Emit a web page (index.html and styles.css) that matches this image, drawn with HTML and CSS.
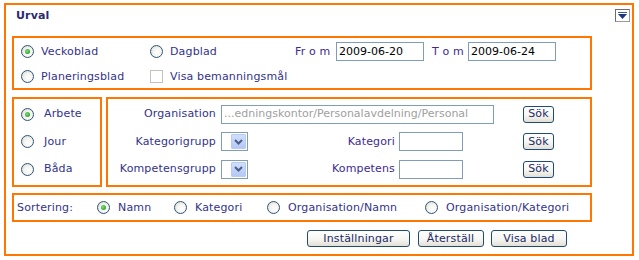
FILE: index.html
```html
<!DOCTYPE html>
<html lang="sv">
<head>
<meta charset="utf-8">
<title>Urval</title>
<link rel="stylesheet" href="styles.css">
</head>
<body>
<div class="panel">
  <div class="head">
    <span class="title">Urval</span>
    <span class="collapse"><svg width="13" height="11" viewBox="0 0 13 11"><rect x="2" y="2" width="9" height="1" fill="#3a5aa8"/><polygon points="2,4 11,4 6.5,9" fill="#1c3680"/></svg></span>
  </div>

  <div class="sec sec1">
    <div class="row">
      <span class="opt w129"><span class="radio on"></span><span class="lbl">Veckoblad</span></span>
      <span class="opt w145"><span class="radio"></span><span class="lbl">Dagblad</span></span>
      <span class="dlabel w41 purple">Fr o m</span>
      <span class="input date">2009-06-20</span>
      <span class="dlabel w36 purple tom">T o m</span>
      <span class="input date">2009-06-24</span>
    </div>
    <div class="row">
      <span class="opt w129"><span class="radio"></span><span class="lbl">Planeringsblad</span></span>
      <span class="opt"><span class="check"></span><span class="lbl">Visa bemanningsmål</span></span>
    </div>
  </div>

  <div class="sec2">
    <div class="sec left">
      <div class="lrow"><span class="radio on"></span><span class="lbl2">Arbete</span></div>
      <div class="lrow"><span class="radio"></span><span class="lbl2">Jour</span></div>
      <div class="lrow"><span class="radio"></span><span class="lbl2">Båda</span></div>
    </div>
    <div class="sec right">
      <span class="c1">Organisation</span>
      <span class="input org">...edningskontor/Personalavdelning/Personal</span>
      <span class="c7"><span class="btn sok">Sök</span></span>

      <span class="c1">Kategorigrupp</span>
      <span class="c2"><span class="select"><span class="selbtn"><svg width="9" height="6" viewBox="0 0 9 6"><polyline points="1,1 4.5,4.5 8,1" fill="none" stroke="#4b5f86" stroke-width="2"/></svg></span></span></span>
      <span class="c3 purple">Kategori</span>
      <span class="c4"><span class="input small"></span></span>
      <span class="c7"><span class="btn sok">Sök</span></span>

      <span class="c1">Kompetensgrupp</span>
      <span class="c2"><span class="select"><span class="selbtn"><svg width="9" height="6" viewBox="0 0 9 6"><polyline points="1,1 4.5,4.5 8,1" fill="none" stroke="#4b5f86" stroke-width="2"/></svg></span></span></span>
      <span class="c3 purple">Kompetens</span>
      <span class="c4"><span class="input small"></span></span>
      <span class="c7"><span class="btn sok">Sök</span></span>
    </div>
  </div>

  <div class="sec sort">
    <span class="sortlbl">Sortering:</span>
    <span class="opt w77"><span class="radio on"></span><span class="lbl">Namn</span></span>
    <span class="opt w93"><span class="radio"></span><span class="lbl">Kategori</span></span>
    <span class="opt w158"><span class="radio"></span><span class="lbl">Organisation/Namn</span></span>
    <span class="opt"><span class="radio"></span><span class="lbl">Organisation/Kategori</span></span>
  </div>

  <div class="actions">
    <span class="btn b1">Inställningar</span>
    <span class="btn b2">Återställ</span>
    <span class="btn b3">Visa blad</span>
  </div>
</div>
</body>
</html>
```

FILE: styles.css
```css
html, body {
  margin: 0;
  padding: 0;
  background: #ffffff;
}
body {
  font-family: "DejaVu Sans", Verdana, sans-serif;
  font-size: 11px;
  line-height: 14px;
  letter-spacing: 0.15px;
  color: #333388;
}
.panel {
  margin: 3px 0 0 4px;
  width: 630px;
  height: 253px;
  border: 2px solid #ff7600;
  box-sizing: border-box;
  padding-left: 6px;
}
.head {
  height: 31px;
  display: flex;
  justify-content: space-between;
  align-items: flex-start;
}
.title {
  font-weight: bold;
  color: #2a2a70;
  margin: 4px 0 0 4px;
}
.collapse {
  width: 15px;
  height: 13px;
  margin: 4px 2px 0 0;
  box-sizing: border-box;
  border: 1px solid #9a9a9a;
  border-left-color: #6d6d6d;
  border-top-color: #6d6d6d;
  background: #ffffff;
  display: flex;
  align-items: center;
  justify-content: center;
}
.sec {
  border: 2px solid #ff7600;
  box-sizing: border-box;
}
.sec1 {
  width: 580px;
  height: 54px;
  padding: 4px 0 0 7px;
  display: flex;
  flex-direction: column;
  gap: 6px;
}
.row {
  display: flex;
  align-items: center;
  height: 19px;
}
.opt {
  display: flex;
  align-items: center;
}
.w129 { width: 129px; }
.w145 { width: 145px; }
.w41 { width: 41px; }
.w36 { width: 36px; }
.w77 { width: 77px; }
.w93 { width: 93px; }
.w158 { width: 158px; }
.tom { margin-left: 8px; }
.purple { color: #3d2a8e; }
.lbl { margin-left: 7px; }
.radio {
  width: 13px;
  height: 13px;
  box-sizing: border-box;
  border-radius: 50%;
  border: 1px solid #305378;
  background: radial-gradient(circle at 60% 60%, #ffffff 0%, #f4f4f0 45%, #d4d4cc 100%);
  display: inline-flex;
  align-items: center;
  justify-content: center;
  flex: none;
}
.radio.on::after {
  content: "";
  width: 5px;
  height: 5px;
  border-radius: 50%;
  background: radial-gradient(circle at 40% 40%, #7ee07e 0%, #2ea42e 70%);
}
.check {
  width: 13px;
  height: 13px;
  box-sizing: border-box;
  border: 1px solid #c6c3b6;
  background: #ffffff;
  flex: none;
}
.input {
  height: 19px;
  box-sizing: border-box;
  border: 1px solid #7f9db9;
  background: #ffffff;
  color: #000000;
  padding: 0 2px;
  display: flex;
  align-items: center;
  white-space: nowrap;
  overflow: hidden;
  letter-spacing: 0;
}
.date { width: 88px; }
.org {
  grid-column: 2 / 6;
  width: 273px;
  color: #a0a0a0;
}
.small { width: 64px; }

.sec2 {
  margin-top: 7px;
  display: flex;
  gap: 4px;
}
.left {
  width: 90px;
  height: 90px;
  padding: 5px 0 0 7px;
  display: flex;
  flex-direction: column;
  gap: 7.5px;
}
.lrow {
  height: 20px;
  display: flex;
  align-items: center;
}
.lbl2 { margin-left: 10px; }
.right {
  width: 486px;
  height: 90px;
  padding-top: 5px;
  display: grid;
  grid-template-columns: 113px 27px 151px 64px 31px 29px auto;
  grid-auto-rows: 20px;
  row-gap: 7.5px;
  align-items: center;
}
.c1 {
  grid-column: 1;
  text-align: right;
  padding-right: 5px;
  white-space: nowrap;
}
.c2 { grid-column: 2; display: flex; }
.c3 {
  grid-column: 3;
  text-align: right;
  padding-right: 4px;
}
.c4 { grid-column: 4; display: flex; }
.c7 { grid-column: 7; display: flex; }
.select {
  width: 27px;
  height: 19px;
  box-sizing: border-box;
  border: 1px solid #7f9db9;
  background: #ffffff;
  display: flex;
  justify-content: flex-end;
  align-items: center;
  padding-right: 1px;
}
.selbtn {
  width: 15px;
  height: 15px;
  box-sizing: border-box;
  border: 1px solid #b9cbf3;
  border-radius: 1px;
  background: linear-gradient(#d0defc, #b4c8f6);
  display: flex;
  align-items: center;
  justify-content: center;
}
.btn {
  height: 17px;
  box-sizing: border-box;
  border: 1px solid #1f4a7a;
  border-radius: 3px;
  background: linear-gradient(#ffffff 0%, #f6f6f2 55%, #e2dfd4 100%);
  color: #1c2a66;
  display: inline-flex;
  align-items: center;
  justify-content: center;
}
.sok { width: 31px; }

.sort {
  margin-top: 6px;
  width: 580px;
  height: 29px;
  padding-left: 3px;
  display: flex;
  align-items: center;
}
.sortlbl { width: 80px; }
.sort .lbl { margin-left: 8px; }

.actions {
  width: 580px;
  margin-top: 8px;
  display: flex;
  justify-content: flex-end;
  padding-right: 25px;
  box-sizing: border-box;
  gap: 7.5px;
}
.b1 { width: 103px; }
.b2 { width: 66px; }
.b3 { width: 76px; }
```
